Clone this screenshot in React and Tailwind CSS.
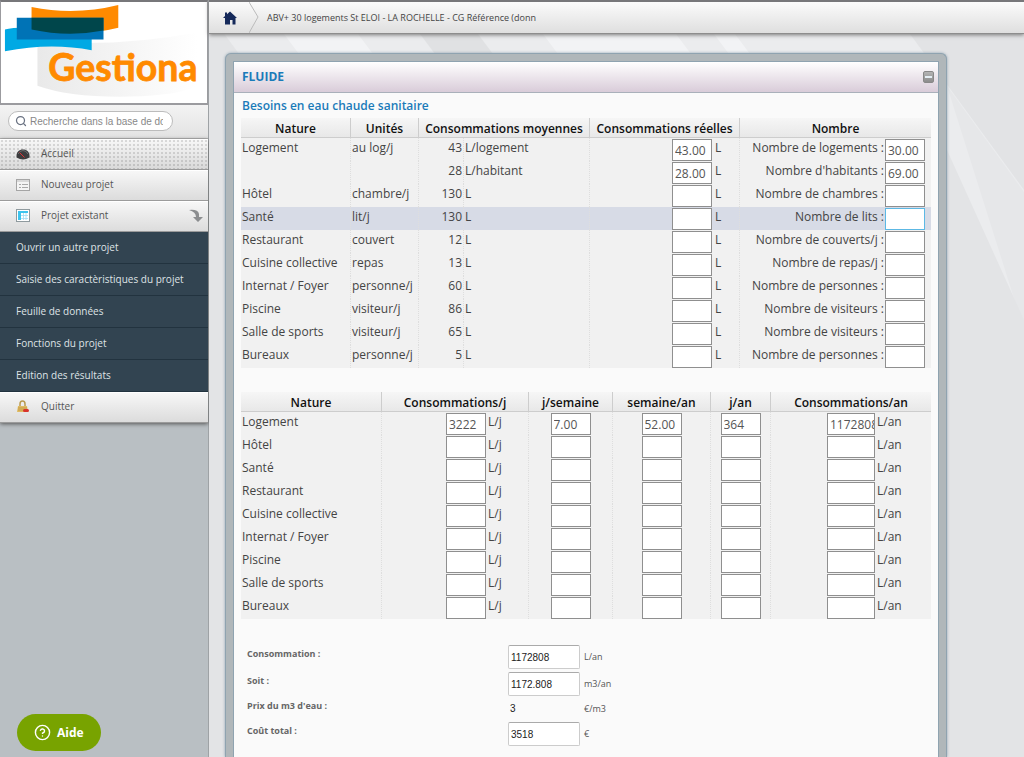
import React from "react";
import { Search, CircleHelp } from "lucide-react";

const needs = [
  { nature: "Logement", unit: "au log/j", avg: 43, avgUnit: "L/logement", real: "43.00", label: "Nombre de logements :", count: "30.00" },
  { nature: "", unit: "", avg: 28, avgUnit: "L/habitant", real: "28.00", label: "Nombre d'habitants :", count: "69.00" },
  { nature: "Hôtel", unit: "chambre/j", avg: 130, avgUnit: "L", real: "", label: "Nombre de chambres :", count: "" },
  { nature: "Santé", unit: "lit/j", avg: 130, avgUnit: "L", real: "", label: "Nombre de lits :", count: "", active: true },
  { nature: "Restaurant", unit: "couvert", avg: 12, avgUnit: "L", real: "", label: "Nombre de couverts/j :", count: "" },
  { nature: "Cuisine collective", unit: "repas", avg: 13, avgUnit: "L", real: "", label: "Nombre de repas/j :", count: "" },
  { nature: "Internat / Foyer", unit: "personne/j", avg: 60, avgUnit: "L", real: "", label: "Nombre de personnes :", count: "" },
  { nature: "Piscine", unit: "visiteur/j", avg: 86, avgUnit: "L", real: "", label: "Nombre de visiteurs :", count: "" },
  { nature: "Salle de sports", unit: "visiteur/j", avg: 65, avgUnit: "L", real: "", label: "Nombre de visiteurs :", count: "" },
  { nature: "Bureaux", unit: "personne/j", avg: 5, avgUnit: "L", real: "", label: "Nombre de personnes :", count: "" },
];

const yearly = [
  { nature: "Logement", day: "3222", week: "7.00", weeks: "52.00", days: "364", total: "1172808" },
  { nature: "Hôtel" },
  { nature: "Santé" },
  { nature: "Restaurant" },
  { nature: "Cuisine collective" },
  { nature: "Internat / Foyer" },
  { nature: "Piscine" },
  { nature: "Salle de sports" },
  { nature: "Bureaux" },
];

const subMenu = [
  "Ouvrir un autre projet",
  "Saisie des caractèristiques du projet",
  "Feuille de données",
  "Fonctions du projet",
  "Edition des résultats",
];

const Logo = () => (
  <svg viewBox="0 0 209 102" className="block w-full" role="img" aria-label="Gestiona">
    <defs>
      <linearGradient id="swoosh" x1="0" x2="1">
        <stop offset="0" stopColor="#e9e9e9" />
        <stop offset="1" stopColor="#ffffff" />
      </linearGradient>
    </defs>
    <path d="M37 40 Q120 46 199 31 V85 Q180 95 130 96 Q70 97 37 85 Z" fill="url(#swoosh)" />
    <path d="M4 28 Q12 25 40 26 L92 36 V49 Q50 41 4 50 Z" fill="#00a9e4" />
    <path d="M31 5 Q75 14 119 3 V26 Q75 37 31 28 Z" fill="#ff8a00" />
    <path d="M16 16 H104 V38 H16 Z" fill="#0073b6" />
    <path d="M31 16 H104 V29 Q68 36 31 28 Z" fill="#00464b" />
    <text
      x="48"
      y="80"
      fontFamily="Lato, sans-serif"
      fontWeight="700"
      fontSize="38"
      fill="#ff8a00"
      stroke="#ff8a00"
      strokeWidth="0.8"
    >
      Gestiona
    </text>
  </svg>
);

const GaugeIcon = () => (
  <svg viewBox="0 0 14 12" className="h-3 w-[14px]" aria-hidden="true">
    <path d="M0.500 8 C0.500 4 3 1.500 7 1.500 S13.500 4 13.500 8 V9.500 Q10 11.500 7 11.500 T0.500 9.500 Z" fill="#3c3c3e" />
    <path d="M2 6 Q4 2.500 7 2.500 T12 6" fill="none" stroke="#77777a" strokeWidth="0.8" />
    <path d="M3.500 4.500 L8.500 9.500" stroke="#d33" strokeWidth="1" />
  </svg>
);

const FormIcon = () => (
  <svg viewBox="0 0 14 12" className="h-3 w-[14px]" aria-hidden="true">
    <rect x="0.5" y="0.5" width="13" height="11" fill="#f4f4f4" stroke="#a5a5a5" />
    <path d="M1 2 H13" stroke="#bdbdbd" />
    <path d="M3 5.500 H5 M3 8.500 H5 M6 5.500 H12 M6 8.500 H12" stroke="#a8a8a8" />
  </svg>
);

const GridIcon = () => (
  <svg viewBox="0 0 14 13" className="h-[13px] w-[14px]" aria-hidden="true">
    <rect x="0.5" y="0.5" width="13" height="12" fill="#fff" stroke="#8f9a9e" />
    <path d="M2 2 H12 V4 H5 V11 H2 Z" fill="#3cc4ee" />
    <path d="M5 6.500 H12 M5 9.500 H12 M7.500 4 V11 M10 4 V11" stroke="#9fdcf2" strokeWidth="0.8" />
  </svg>
);

const LockIcon = () => (
  <svg viewBox="0 0 14 13" className="h-[13px] w-[14px]" aria-hidden="true">
    <path d="M4 6 V4 Q4 1 6.500 1 T9 4 V6" fill="none" stroke="#b99a4e" strokeWidth="1.500" />
    <path d="M2 6 H11 L12 12 H1 Z" fill="#e0bb62" />
    <path d="M2 8 H11 M2 10 H11" stroke="#b88f3c" strokeWidth="0.7" />
    <rect x="7" y="9" width="6" height="3" rx="1.500" fill="#d8322b" />
  </svg>
);

const ArrowIcon = () => (
  <svg viewBox="0 0 16 14" className="h-[14px] w-4" aria-hidden="true">
    <path d="M1 1 Q10 0 11 5 V8 H15 L10 13 L5 8 H8 Q8 3 1 1 Z" fill="#8b8d8f" />
  </svg>
);

const MenuItem = ({ icon, label, className = "", children }) => (
  <a
    href="#"
    className={`flex h-[31px] items-center gap-[11px] border-b border-[#9b9b9b] bg-gradient-to-b from-[#f8f8f8] to-[#dcdcdc] pr-1 pl-4 text-[10px] text-[#555] shadow-[inset_0_1px_0_#fff] ${className}`}
  >
    <span className="flex w-[14px] justify-center">{icon}</span>
    <span className="flex-1">{label}</span>
    {children}
  </a>
);

const Sidebar = () => (
  <aside className="flex w-[209px] shrink-0 flex-col border-r border-[#9ea2a5] bg-[#b9bfc3]">
    <div className="border border-t-2 border-b-2 border-[#9b9b9f] border-t-[#77777a] bg-white">
      <Logo />
    </div>
    <div className="flex h-[34px] items-center border-b border-[#b5b5b5] bg-gradient-to-b from-[#f3f3f3] to-[#e3e3e3] pl-2">
      <label className="flex h-5 w-[165px] items-center rounded-full border border-[#bcbcbc] bg-white pr-[9px] pl-1.5">
        <Search className="h-3 w-3 shrink-0 text-gray-500" strokeWidth={2.5} />
        <input
          type="text"
          aria-label="Recherche"
          placeholder="Recherche dans la base de données"
          className="ml-[3px] w-full min-w-0 font-['Liberation_Sans',sans-serif] text-[10px] outline-none placeholder:text-[#888]"
        />
      </label>
    </div>
    <nav className="shadow-[0_1px_4px_#555]">
      <MenuItem
        icon={<GaugeIcon />}
        label="Accueil"
        className="bg-[radial-gradient(#0000001f_1px,transparent_1px),linear-gradient(#f8f8f8,#d9d9d9)] bg-[size:4px_4px,100%_100%]"
      />
      <MenuItem icon={<FormIcon />} label="Nouveau projet" />
      <MenuItem icon={<GridIcon />} label="Projet existant">
        <ArrowIcon />
      </MenuItem>
      <ul className="bg-[#324451] text-[10px] text-[#dfe3e6]">
        {subMenu.map((label) => (
          <li key={label}>
            <a href="#" className="flex h-8 items-center border-b border-[#22333f] px-4">
              {label}
            </a>
          </li>
        ))}
      </ul>
      <MenuItem icon={<LockIcon />} label="Quitter" />
    </nav>
  </aside>
);

const TopBar = () => (
  <header className="relative flex h-[34px] items-center border-t-2 border-b border-t-[#77777a] border-b-[#8d8d8d] bg-gradient-to-b from-[#fbfbfb] to-[#dfdfdf] pl-[14px] text-[9px] text-[#444] shadow-[0_1px_4px_#777]">
    <a href="#" aria-label="Accueil">
      <svg viewBox="0 0 14 14" className="h-[14px] w-[14px]" aria-hidden="true">
        <path d="M7 0.500 L14 7 H12.500 V13.500 H9.500 V9 H7 V13.500 H2 V7 H0 L2 5 V1.500 H4 V3.200 Z" fill="#15295a" />
      </svg>
    </a>
    <svg viewBox="0 0 10 31" className="ml-3 h-[31px] w-[10px]" aria-hidden="true">
      <path d="M0 0 L9 15 L0 31" fill="none" stroke="#bbb" />
    </svg>
    <span className="ml-2">ABV+ 30 logements St ELOI - LA ROCHELLE - CG Référence (donn</span>
  </header>
);

const Backdrop = () => (
  <svg
    viewBox="209 0 815 757"
    preserveAspectRatio="none"
    className="absolute inset-0 h-full w-full"
    aria-hidden="true"
  >
    <rect x="209" width="815" height="757" fill="#ebecee" />
    <path d="M209 20 L214 20 L760 757 H209 Z" fill="#e3e4e6" />
    <path d="M284 34 H358 L400 90 H326 Z M543 34 H676 L718 90 H585 Z M714 34 H735 L777 90 H756 Z" fill="#f2f3f5" />
    <path d="M420 34 H478 L520 90 H462 Z" fill="#e0e1e3" />
    <path d="M910 34 H1024 V190 Z" fill="#e2e3e5" />
    <path d="M947 86 L1024 192 V330 Z" fill="#e6e7e9" />
    <path d="M947 150 V757 H1024 V320 Z" fill="#e3e4e6" />
  </svg>
);

const CellInput = ({ label, value = "", width = "w-10", active = false }) => (
  <input
    type="text"
    aria-label={label}
    defaultValue={value}
    className={`block h-[22px] border bg-white pt-px pl-0.5 text-[12px] text-[#555] outline-none ${width} ${
      active ? "border-[#5cb8e4]" : "border-[#8f8f8f]"
    }`}
  />
);

const headCell =
  "h-5 border-r border-b border-[#cdcdcd] bg-gradient-to-b from-[#f6f6f6] to-[#e8e8e8] pt-0.5 text-[12px] leading-4 font-semibold whitespace-nowrap text-[#111] last:border-r-0";
const cell = "h-[23px] border-r border-dotted border-[#dedede] px-px align-top leading-5 whitespace-nowrap last:border-r-0";
const plainCell = "h-[23px] p-0 align-top leading-5 whitespace-nowrap";

const NeedsTable = () => (
  <table className="w-full table-fixed border-separate border-spacing-0 bg-[#f1f1f1] text-[12px] text-[#444]">
    <colgroup>
      <col className="w-[110px]" />
      <col className="w-[68px]" />
      <col className="w-[45px]" />
      <col className="w-[126px]" />
      <col className="w-[124px]" />
      <col className="w-[26px]" />
      <col className="w-[145px]" />
      <col className="w-[46px]" />
    </colgroup>
    <thead>
      <tr>
        <th className={headCell}>Nature</th>
        <th className={headCell}>Unités</th>
        <th className={headCell} colSpan={2}>Consommations moyennes</th>
        <th className={headCell} colSpan={2}>Consommations réelles</th>
        <th className={headCell} colSpan={2}>Nombre</th>
      </tr>
    </thead>
    <tbody>
      {needs.map((row, i) => (
        <tr key={i} className={row.active ? "bg-[#d7dbe6]" : ""}>
          <td className={cell}>{row.nature}</td>
          <td className={cell}>{row.unit}</td>
          <td className={`${cell} text-right`}>{row.avg}</td>
          <td className={cell}>{row.avgUnit}</td>
          <td className={plainCell}>
            <div className="flex justify-end pt-px pr-0.5">
              <CellInput label={`Consommation réelle ${row.nature}`} value={row.real} />
            </div>
          </td>
          <td className={cell}>L</td>
          <td className={`${plainCell} pr-px text-right`}>{row.label}</td>
          <td className={`${plainCell} pt-px`}>
            <CellInput label={row.label} value={row.count} active={row.active} />
          </td>
        </tr>
      ))}
    </tbody>
  </table>
);

const YearTable = () => (
  <table className="mt-6 w-full table-fixed border-separate border-spacing-0 bg-[#f1f1f1] text-[12px] text-[#444]">
    <colgroup>
      <col className="w-[141px]" />
      <col className="w-[105px]" />
      <col className="w-[42px]" />
      <col className="w-[84px]" />
      <col className="w-[98px]" />
      <col className="w-[60px]" />
      <col className="w-[105px]" />
      <col className="w-[55px]" />
    </colgroup>
    <thead>
      <tr>
        <th className={headCell}>Nature</th>
        <th className={headCell} colSpan={2}>Consommations/j</th>
        <th className={headCell}>j/semaine</th>
        <th className={headCell}>semaine/an</th>
        <th className={headCell}>j/an</th>
        <th className={headCell} colSpan={2}>Consommations/an</th>
      </tr>
    </thead>
    <tbody>
      {yearly.map((row) => (
        <tr key={row.nature}>
          <td className={cell}>{row.nature}</td>
          <td className={plainCell}>
            <div className="flex justify-end pt-px pr-px">
              <CellInput label={`${row.nature} L/j`} value={row.day} />
            </div>
          </td>
          <td className={cell}>L/j</td>
          <td className={`${plainCell} border-r border-dotted border-[#dedede]`}>
            <div className="flex justify-center pt-px">
              <CellInput label={`${row.nature} j/semaine`} value={row.week} />
            </div>
          </td>
          <td className={`${plainCell} border-r border-dotted border-[#dedede]`}>
            <div className="flex justify-center pt-px">
              <CellInput label={`${row.nature} semaine/an`} value={row.weeks} />
            </div>
          </td>
          <td className={`${plainCell} border-r border-dotted border-[#dedede]`}>
            <div className="flex justify-center pt-px">
              <CellInput label={`${row.nature} j/an`} value={row.days} />
            </div>
          </td>
          <td className={plainCell}>
            <div className="flex justify-end pt-px pr-px">
              <CellInput label={`${row.nature} L/an`} value={row.total} width="w-12" />
            </div>
          </td>
          <td className={cell}>L/an</td>
        </tr>
      ))}
    </tbody>
  </table>
);

const SummaryRow = ({ id, label, value, unit, readOnly = false }) => (
  <div className="flex items-center text-[9px] text-[#555]">
    <label htmlFor={id} className="w-[261px] pb-1.5 font-bold text-[#666]">
      {label}
    </label>
    {readOnly ? (
      <output id={id} className="w-[72px] pl-0.5 font-['Liberation_Sans',sans-serif] text-[10px] leading-5 text-[#222]">
        {value}
      </output>
    ) : (
      <input
        id={id}
        type="text"
        defaultValue={value}
        className="h-6 w-[72px] rounded-xs border border-[#ccc] border-t-[#aaa] bg-white pl-0.5 font-['Liberation_Sans',sans-serif] text-[10px] text-[#222] outline-none"
      />
    )}
    <span className="pl-1">{unit}</span>
  </div>
);

const App = () => {
  return (
    <div className="flex min-h-screen bg-[#e6e7e9] font-['Open_Sans','Noto_Sans',sans-serif]">
      <Sidebar />

      <div className="relative flex min-w-0 flex-1 flex-col">
        <Backdrop />
        <TopBar />

        <main className="relative mt-[19px] mr-[77px] ml-4 flex-1 rounded-t-md border border-b-0 border-[#8fa3b0] bg-[#b0b7ba] px-[7px] pt-[7px] shadow-[0_0_3px_#8fa3b0]">
          <section className="h-full border border-b-0 border-[#8fa3b0] bg-[#fafafa]">
            <div className="flex h-[31px] items-center justify-between border-b border-[#a9b0ba] bg-gradient-to-b from-white to-[#d9ccd9] pr-1 pl-2">
              <h1 className="text-[12px] font-bold text-[#1a7bb9]">FLUIDE</h1>
              <button
                type="button"
                aria-label="Réduire"
                className="flex h-3 w-[11px] items-center justify-center rounded-xs border border-[#888] bg-gradient-to-b from-[#b4b4b4] to-[#8c8c8c]"
              >
                <span className="h-0.5 w-[7px] bg-[#e4eef4]" />
              </button>
            </div>

            <div className="pr-2 pl-[7px]">
              <h2 className="pt-[5px] pb-1 pl-px text-[12px] leading-4 font-semibold text-[#1a7bb9]">
                Besoins en eau chaude sanitaire
              </h2>
              <NeedsTable />
              <YearTable />

              <div className="mt-[26px] space-y-[3px] pl-1.5">
                <SummaryRow id="conso" label="Consommation :" value="1172808" unit="L/an" />
                <SummaryRow id="soit" label="Soit :" value="1172.808" unit="m3/an" />
                <SummaryRow id="prix" label="Prix du m3 d'eau :" value="3" unit="€/m3" readOnly />
                <SummaryRow id="cout" label="Coût total :" value="3518" unit="€" />
              </div>
            </div>
          </section>
        </main>
      </div>

      <button
        type="button"
        className="fixed bottom-1.5 left-[17px] flex h-[37px] items-center gap-1.5 rounded-full bg-[#78a300] px-[17px] text-[12px] font-bold text-white"
      >
        <CircleHelp className="h-[17px] w-[17px]" />
        Aide
      </button>
    </div>
  );
};

export default App;
